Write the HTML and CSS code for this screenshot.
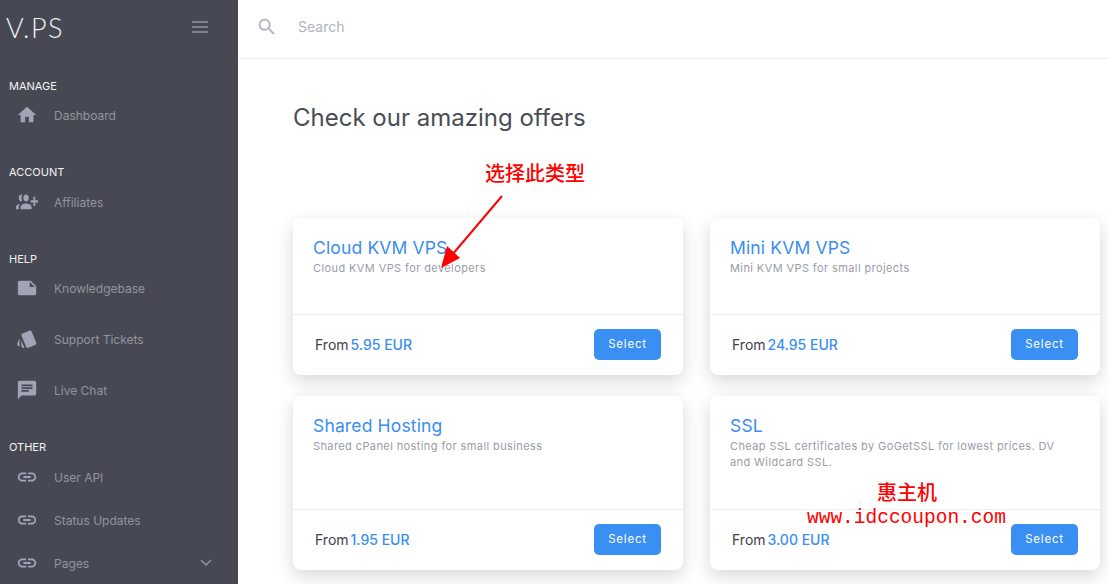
FILE: index.html
```html
<!DOCTYPE html>
<html lang="en">
<head>
    <meta charset="UTF-8" />
    <title>V.PS - Offers</title>
    <link rel="stylesheet" href="styles.css">
</head>
<body>

<aside class="sidebar">
    <div class="brand">
        <span class="logo">V.PS</span>
        <div class="burger"><span></span><span></span><span></span></div>
    </div>

    <div class="nav-section">
        <div class="nav-label">MANAGE</div>
        <a class="nav-item" href="#">
            <svg class="nav-icon" viewBox="0 0 24 24"><path d="M10 20v-6h4v6h5v-8h3L12 3 2 12h3v8z"/></svg>
            Dashboard
        </a>
    </div>

    <div class="nav-section">
        <div class="nav-label nav-gap">ACCOUNT</div>
        <a class="nav-item" href="#">
            <svg class="nav-icon" viewBox="0 0 24 24"><path transform="matrix(-1 0 0 1.25 24 -2.5)" d="M8 10H5V7H3v3H0v2h3v3h2v-3h3v-2zm10 1c1.66 0 2.99-1.34 2.99-3S19.66 5 18 5c-.32 0-.63.05-.91.14.57.81.9 1.79.9 2.86s-.34 2.04-.9 2.86c.28.09.59.14.91.14zm-5 0c1.66 0 2.99-1.34 2.99-3S14.66 5 13 5s-3 1.34-3 3 1.34 3 3 3zm6.62 2.16c.83.73 1.38 1.66 1.38 2.84v2h3v-2c0-1.54-2.37-2.49-4.38-2.84zM13 13c-2 0-6 1-6 3v2h12v-2c0-2-4-3-6-3z"/></svg>
            Affiliates
        </a>
    </div>

    <div class="nav-section nav-wide">
        <div class="nav-label">HELP</div>
        <a class="nav-item" href="#">
            <svg class="nav-icon" viewBox="0 0 24 24"><path d="M22 10l-6-6H4c-1.1 0-2 .9-2 2v12.01c0 1.1.9 1.99 2 1.99l16-.01c1.1 0 2-.89 2-1.99v-8zm-7-4.5l5.5 5.5H15V5.5z"/></svg>
            Knowledgebase
        </a>
        <a class="nav-item" href="#">
            <svg class="nav-icon" viewBox="0 0 24 24"><path d="M2.53 19.65l1.34.56v-9.03l-2.43 5.86c-.41 1.02.08 2.19 1.09 2.61zm19.5-3.7L17.07 3.98c-.31-.75-1.04-1.21-1.81-1.23-.26 0-.53.04-.79.15L7.1 5.95c-.75.31-1.21 1.03-1.23 1.8-.01.27.04.54.15.8l4.96 11.97c.31.76 1.05 1.22 1.83 1.23.26 0 .52-.05.77-.15l7.36-3.05c1.02-.42 1.51-1.59 1.09-2.6zM5.88 19.75c0 1.1.9 2 2 2h1.45l-3.45-8.34v6.34z"/></svg>
            Support Tickets
        </a>
        <a class="nav-item" href="#">
            <svg class="nav-icon" viewBox="0 0 24 24"><path d="M20 2H4c-1.1 0-2 .9-2 2v18l4-4h14c1.1 0 2-.9 2-2V4c0-1.1-.9-2-2-2zM6 9h12v2H6V9zm8 5H6v-2h8v2zm4-6H6V6h12v2z"/></svg>
            Live Chat
        </a>
    </div>

    <div class="nav-section">
        <div class="nav-label nav-gap">OTHER</div>
        <a class="nav-item" href="#">
            <svg class="nav-icon" viewBox="0 0 24 24"><path d="M3.9 12c0-1.71 1.39-3.1 3.1-3.1h4V7H7c-2.76 0-5 2.24-5 5s2.24 5 5 5h4v-1.9H7c-1.71 0-3.1-1.39-3.1-3.1zM8 13h8v-2H8v2zm9-6h-4v1.9h4c1.71 0 3.1 1.39 3.1 3.1s-1.39 3.1-3.1 3.1h-4V17h4c2.76 0 5-2.24 5-5s-2.24-5-5-5z"/></svg>
            User API
        </a>
        <a class="nav-item" href="#">
            <svg class="nav-icon" viewBox="0 0 24 24"><path d="M3.9 12c0-1.71 1.39-3.1 3.1-3.1h4V7H7c-2.76 0-5 2.24-5 5s2.24 5 5 5h4v-1.9H7c-1.71 0-3.1-1.39-3.1-3.1zM8 13h8v-2H8v2zm9-6h-4v1.9h4c1.71 0 3.1 1.39 3.1 3.1s-1.39 3.1-3.1 3.1h-4V17h4c2.76 0 5-2.24 5-5s-2.24-5-5-5z"/></svg>
            Status Updates
        </a>
        <a class="nav-item" href="#">
            <svg class="nav-icon" viewBox="0 0 24 24"><path d="M3.9 12c0-1.71 1.39-3.1 3.1-3.1h4V7H7c-2.76 0-5 2.24-5 5s2.24 5 5 5h4v-1.9H7c-1.71 0-3.1-1.39-3.1-3.1zM8 13h8v-2H8v2zm9-6h-4v1.9h4c1.71 0 3.1 1.39 3.1 3.1s-1.39 3.1-3.1 3.1h-4V17h4c2.76 0 5-2.24 5-5s-2.24-5-5-5z"/></svg>
            Pages
            <svg class="nav-caret" viewBox="0 0 12 8"><path d="M1 1l5 5 5-5"/></svg>
        </a>
    </div>
</aside>

<div class="main">
    <header class="topbar">
        <svg class="search-icon" viewBox="0 0 24 24"><path d="M15.5 14h-.79l-.28-.27C15.41 12.59 16 11.11 16 9.5 16 5.91 13.09 3 9.5 3S3 5.91 3 9.5 5.91 16 9.5 16c1.61 0 3.09-.59 4.23-1.57l.27.28v.79l5 4.99L20.49 19l-4.99-5zm-6 0C7.01 14 5 11.99 5 9.5S7.01 5 9.5 5 14 7.01 14 9.5 11.99 14 9.5 14z"/></svg>
        <span class="search-text">Search</span>
    </header>

    <div class="content">
        <h1 class="page-title">Check our amazing offers</h1>

        <div class="offers">
            <div class="card">
                <div class="card-body">
                    <h3>Cloud KVM VPS</h3>
                    <p>Cloud KVM VPS for developers</p>
                </div>
                <div class="card-foot">
                    <span class="price">From <b>5.95 EUR</b></span>
                    <button>Select</button>
                </div>
            </div>
            <div class="card">
                <div class="card-body">
                    <h3>Mini KVM VPS</h3>
                    <p>Mini KVM VPS for small projects</p>
                </div>
                <div class="card-foot">
                    <span class="price">From <b>24.95 EUR</b></span>
                    <button>Select</button>
                </div>
            </div>
            <div class="card">
                <div class="card-body">
                    <h3>Shared Hosting</h3>
                    <p>Shared cPanel hosting for small business</p>
                </div>
                <div class="card-foot">
                    <span class="price">From <b>1.95 EUR</b></span>
                    <button>Select</button>
                </div>
            </div>
            <div class="card">
                <div class="card-body">
                    <h3>SSL</h3>
                    <p>Cheap SSL certificates by GoGetSSL for lowest prices. DV and Wildcard SSL.</p>
                </div>
                <div class="card-foot">
                    <span class="price">From <b>3.00 EUR</b></span>
                    <button>Select</button>
                </div>
            </div>
        </div>
    </div>
</div>

<!-- red notes drawn on top of the screenshot -->
<div class="note note-pick">选择此类型</div>
<svg class="note-arrow" viewBox="0 0 70 80">
    <path d="M64 2L14 61" stroke="#f00" stroke-width="2" fill="none"/>
    <path d="M3 74L9 52L22 64z" fill="#f00"/>
</svg>
<div class="note note-site">惠主机</div>
<div class="note note-url">www.idccoupon.com</div>

</body>
</html>
```

FILE: styles.css
```css
* {
  box-sizing: border-box;
}

html, body {
  height: 100%;
}

body {
  margin: 0;
  display: flex;
  height: 100vh;
  overflow: hidden;
  font-family: Inter, "Noto Sans CJK SC", sans-serif;
  background-color: white;
}

.sidebar {
  flex: 0 0 238px;
  background-color: #464953;
  color: #92959f;
  font-size: 12px;
}

.brand {
  height: 58px;
  display: flex;
  align-items: center;
  justify-content: space-between;
  padding: 0 30px 4px 6px;
}

.logo {
  margin-top: 1px;
  font-family: Lato, sans-serif;
  font-weight: 300;
  font-size: 27px;
  letter-spacing: 1.5px;
  color: #f0f0f2;
}

.burger {
  width: 16px;
  display: flex;
  flex-direction: column;
  gap: 3px;
}

.burger span {
  height: 2px;
  background-color: #80838f;
}

.nav-section {
  padding-top: 20px;
  margin-bottom: 8px;
}

.nav-section + .nav-section {
  padding-top: 0;
  margin-top: 28px;
  margin-bottom: 0;
}

.nav-label {
  height: 16px;
  line-height: 16px;
  padding-left: 9px;
  font-size: 11px;
  color: #f2f2f4;
}

.nav-gap {
  margin-bottom: 1px;
}

.nav-item {
  height: 42px;
  display: flex;
  align-items: center;
  padding-left: 16px;
  color: #92959f;
  text-decoration: none;
}

.nav-wide {
  display: flex;
  flex-direction: column;
  gap: 9px;
}

.nav-wide .nav-label {
  margin-bottom: -9px;
}

.nav-section:last-child .nav-item + .nav-item {
  margin-top: 1px;
}

.nav-icon {
  width: 22px;
  height: 22px;
  margin-right: 16px;
  fill: #a0a4b4;
}

.nav-caret {
  width: 12px;
  height: 8px;
  margin-left: auto;
  margin-right: 26px;
  fill: none;
  stroke: #92959f;
  stroke-width: 1.4;
}

.main {
  flex: 1;
  min-width: 0;
}

.topbar {
  height: 59px;
  display: flex;
  align-items: center;
  padding: 0 0 4px 18px;
  border-bottom: 1px solid #ebedf2;
}

.search-icon {
  width: 22px;
  height: 22px;
  margin-right: 20px;
  fill: #b2b4c0;
}

.search-text {
  margin-bottom: 1px;
  font-size: 14px;
  color: #b0b2c0;
}

.content {
  padding: 0 8px 0 55px;
}

.page-title {
  margin: 44px 0 85px;
  height: 30px;
  line-height: 30px;
  font-size: 24px;
  font-weight: 400;
  color: #4a4d55;
}

.offers {
  display: grid;
  grid-template-columns: 390px 390px;
  grid-template-rows: 157px 174px;
  gap: 21px 27px;
}

.card {
  display: flex;
  flex-direction: column;
  background-color: white;
  border-radius: 8px;
  box-shadow: 0 6px 18px rgba(0,0,0,0.16);
}

.card-body {
  flex: 1;
  padding: 20px 20px 0;
  border-bottom: 1px solid #ebedf2;
}

.card-body h3 {
  margin: 0;
  font-size: 17.5px;
  line-height: 20px;
  letter-spacing: 0.15px;
  font-weight: 400;
  color: #3a8ef0;
}

.card-body p {
  max-width: 335px;
  margin: 2px 0 0;
  font-size: 11px;
  line-height: 16px;
  letter-spacing: 0.4px;
  color: #9a9ca8;
}

.card-foot {
  height: 60px;
  flex: none;
  display: flex;
  align-items: center;
  justify-content: space-between;
  padding: 0 22px 2px;
}

.price {
  font-size: 14px;
  word-spacing: -2px;
  color: #3f4149;
}

.price b {
  font-weight: 500;
  word-spacing: 0;
  color: #3a8ef0;
}

button {
  width: 67px;
  height: 31px;
  padding: 0;
  font-family: inherit;
  font-size: 11.5px;
  letter-spacing: 0.8px;
  background-color: #3a8ff2;
  color: white;
  border: none;
  border-radius: 5px;
}

.note {
  position: absolute;
  color: #f00;
  white-space: nowrap;
}

.note-pick {
  left: 485px;
  top: 160px;
  font-size: 20px;
  font-weight: 500;
  line-height: 26px;
  font-family: "Noto Sans CJK SC", sans-serif;
}

.note-site {
  left: 877px;
  top: 479px;
  font-size: 20px;
  font-weight: 500;
  line-height: 26px;
  font-family: "Noto Sans CJK SC", sans-serif;
}

.note-url {
  left: 807px;
  top: 505px;
  font-size: 19.5px;
  line-height: 26px;
  font-family: "Liberation Mono", monospace;
}

.note-arrow {
  position: absolute;
  left: 438px;
  top: 194px;
  width: 70px;
  height: 80px;
}
```
